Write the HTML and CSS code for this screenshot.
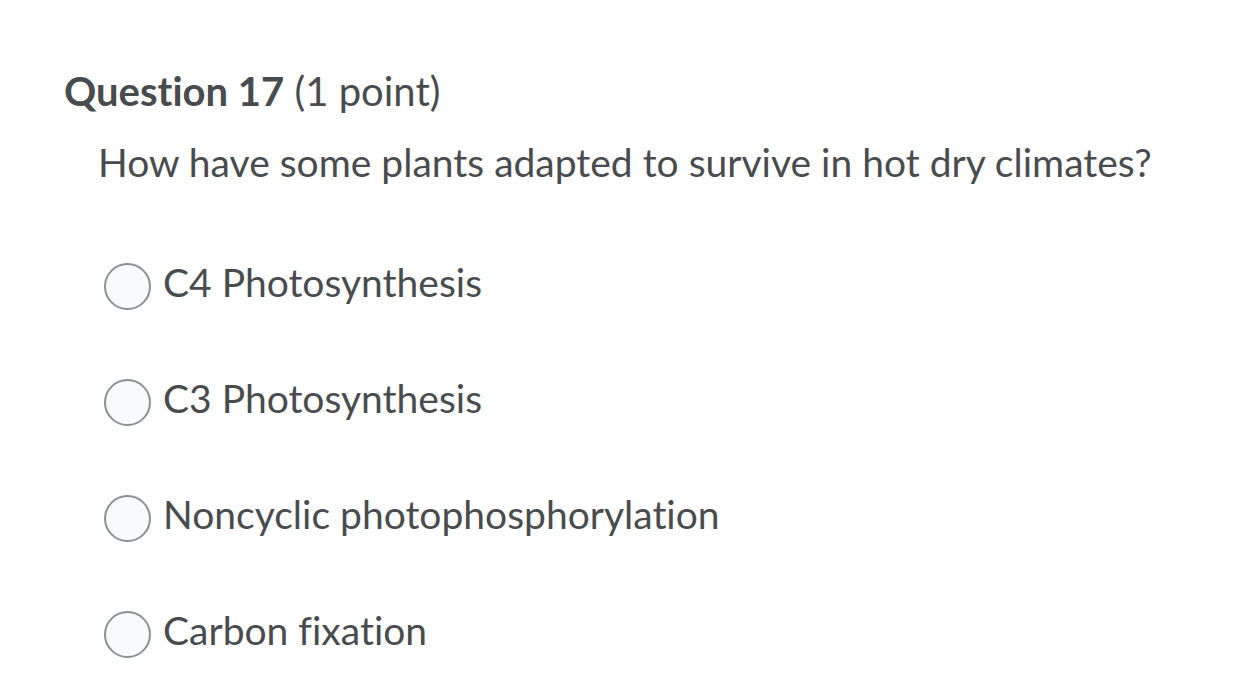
FILE: index.html
```html
<!DOCTYPE html>
<html>
<head>
<meta charset="utf-8">
<link rel="stylesheet" href="styles.css">
</head>
<body>
<div class="question">
  <h2 class="title"><span class="qnum">Question 17</span> <span class="points">(1 point)</span></h2>
  <p class="prompt">How have some plants adapted to survive in hot dry climates?</p>
  <ul class="options">
    <li class="option"><span class="radio"></span><span class="label">C4 Photosynthesis</span></li>
    <li class="option"><span class="radio"></span><span class="label">C3 Photosynthesis</span></li>
    <li class="option"><span class="radio"></span><span class="label">Noncyclic photophosphorylation</span></li>
    <li class="option"><span class="radio"></span><span class="label">Carbon fixation</span></li>
  </ul>
</div>
</body>
</html>
```

FILE: styles.css
```css
html, body {
  margin: 0;
  padding: 0;
  background: #ffffff;
}
body {
  font-family: Lato, "Noto Sans", sans-serif;
  color: #494c4e;
  font-variant-ligatures: none;
  font-feature-settings: "liga" 0;
}
.question {
  padding: 67px 0 0 64px;
}
.title {
  margin: 0;
  font-size: 40px;
  line-height: 48px;
  font-weight: 400;
}
.qnum {
  font-weight: 700;
}
.prompt {
  margin: 23px 0 0 34px;
  font-size: 39px;
  line-height: 48px;
}
.options {
  list-style: none;
  margin: 77px 0 0 40px;
  padding: 0;
  display: flex;
  flex-direction: column;
  gap: 69px;
}
.option {
  display: flex;
  align-items: flex-start;
  gap: 12px;
  height: 47px;
}
.radio {
  box-sizing: border-box;
  width: 47px;
  height: 47px;
  border: 2px solid #8b9094;
  border-radius: 50%;
  background: #f9fafe;
  flex: none;
}
.label {
  font-size: 39px;
  line-height: 48px;
  margin-top: -5px;
}
```
